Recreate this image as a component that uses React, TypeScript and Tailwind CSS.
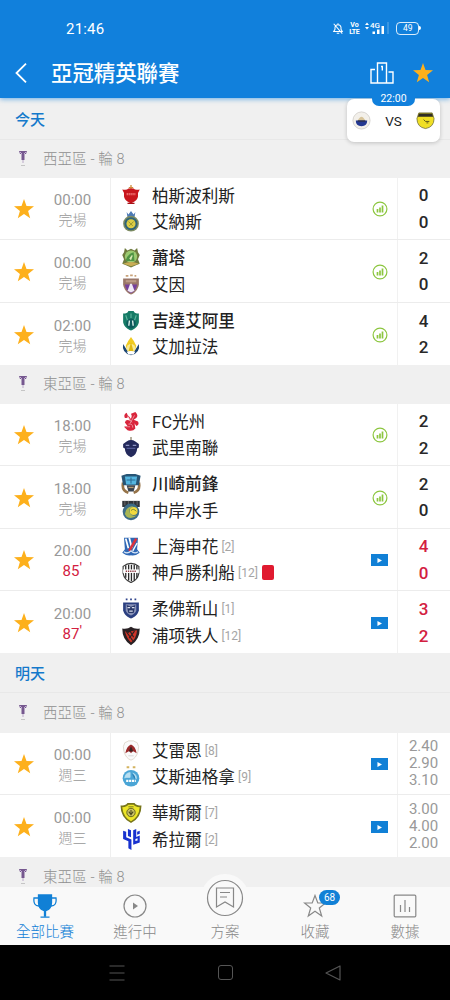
import React from "react";
import clsx from "clsx";

interface Team {
  name: string;
  crest: React.ReactNode;
  rank?: number;
  winner?: boolean;
  redCard?: boolean;
}

interface Match {
  time: string;
  status: string;
  live?: boolean;
  home: Team;
  away: Team;
  action: "stats" | "video";
  score?: [string, string];
  odds?: string[];
}

const Crest = ({ children }: { children: React.ReactNode }) => (
  <svg viewBox="0 0 24 24" className="h-[21px] w-[22px] shrink-0">
    {children}
  </svg>
);

const crests = {
  persepolis: (
    <Crest>
      <path d="M12 0V5M9.500 3H14.500" stroke="#d08a3a" strokeWidth="1.500" />
      <path d="M2 5Q7 6.500 9 4H15Q17 6.500 22 5Q19.500 8 20 13C19 18 15 19 12 21C9 19 5 18 4 13Q4.500 8 2 5Z" fill="#c8161d" />
      <path d="M7 10.500H17" stroke="#ee7070" strokeWidth="2.500" strokeDasharray="1.500 .7" />
      <path d="M8 21H16" stroke="#a61217" strokeWidth="1.500" />
    </Crest>
  ),
  nassr: (
    <Crest>
      <path d="M7 1L9 4L12 0L15 4L17 1L16 7H8Z" fill="#4c79b5" />
      <circle cx="12" cy="14.500" r="9" fill="#7f8c62" />
      <circle cx="12" cy="14.500" r="7.500" fill="#2f6478" />
      <circle cx="12" cy="14.500" r="5.200" fill="#dccd45" />
      <path d="M9 12L14 17M10 17L15 12" stroke="#8e8f2c" strokeWidth="1" />
    </Crest>
  ),
  shorta: (
    <Crest>
      <path d="M5 1L8 4L12 2L16 4L19 1L20 6L22 9L20 14L22 19Q17 21 12 23.500Q7 21 2 19L4 14L2 9L4 6Z" fill="#6f7b3e" />
      <circle cx="12" cy="11" r="7" fill="#9ccb72" />
      <path d="M6 15Q9 7 15 6L16 16H7Z" fill="#4f9444" />
      <path d="M10 13L13 9L14 10L12 15Z" fill="#d9e8b2" />
      <path d="M3 19Q12 15 21 19L12 22Z" fill="#c9ad55" />
    </Crest>
  ),
  ain: (
    <Crest>
      <path d="M6 2H9M11 1.500H14M16 2H18" stroke="#c8a27a" strokeWidth="2" />
      <path d="M3 5H21V12C20 18 16 22 12 23.500C8 22 4 18 3 12Z" fill="#9a7768" />
      <path d="M5 12H19Q18 19 12 22Q6 19 5 12Z" fill="#76409c" />
      <path d="M6 7H18V9.500H6Z" fill="#bd9c86" />
      <path d="M8 19L11 11H13L16 19L12 21Z" fill="#efe8f6" />
    </Crest>
  ),
  ahli: (
    <Crest>
      <path d="M3 4Q8 4 9 1H15Q16 4 21 4V14C20 19 16 22 12 23.500C8 22 4 19 3 14Z" fill="#167b66" />
      <path d="M6 6L8 12M12 4V9M18 6L16 12" stroke="#5fb39d" strokeWidth="1.300" />
      <circle cx="12" cy="15.500" r="5.500" fill="#0d5b5c" />
      <path d="M10.200 12L9.500 18M13.800 12L14.500 18" stroke="#dff2ec" strokeWidth="1.600" />
    </Crest>
  ),
  gharafa: (
    <Crest>
      <path d="M12 1Q16 6 18 11L16 18H8L6 11Q8 6 12 1Z" fill="#f0cb22" />
      <path d="M3 9Q1 19 12 22Q23 19 21 9L16 17H8Z" fill="#1c4572" />
      <circle cx="12" cy="14" r="5" fill="#f8e993" />
      <path d="M9 18L12 7L15 18Z" fill="#e0b90f" />
      <path d="M7 18Q12 16 17 18L15 21H9Z" fill="#fff" />
    </Crest>
  ),
  guangzhou: (
    <Crest>
      <path d="M7 2Q3 4 5 8Q9 8 9 5L12 9Q14 6 12 3L17 1Q21 5 18 8L15 10L20 12Q22 16 18 17L16 14L17 20Q14 24 8 22L4 18L8 17L5 13Q6 9 11 11Z" fill="#d9253c" />
      <path d="M8 6L13 13M16 5L11 14M9 15Q14 14 14 19M6 18H11" stroke="#f3b5bd" strokeWidth=".8" fill="none" />
    </Crest>
  ),
  buriram: (
    <Crest>
      <path d="M12 0V5" stroke="#8f866c" strokeWidth="1.500" />
      <path d="M7 5Q12 2 17 5L21 8V12L19 13Q19 20 12 23Q5 20 5 13L3 12V8Z" fill="#242a5c" />
      <path d="M6 9.500H10M14 9.500H18" stroke="#8d93c2" strokeWidth="1.300" />
      <path d="M7 13H17" stroke="#535b96" strokeWidth="1.500" />
    </Crest>
  ),
  kawasaki: (
    <Crest>
      <path d="M3 11Q1 20 9 22.500M21 11Q23 20 15 22.500" fill="none" stroke="#967449" strokeWidth="3" />
      <path d="M1 3L7 1H17L23 3L21 14H3Z" fill="#285575" />
      <path d="M5 4H19L17.500 13H6.500Z" fill="#55b6e0" />
      <path d="M7 8H17M12 5V12" stroke="#2c6a91" strokeWidth="1.200" />
      <path d="M7 14H17L15 21H9Z" fill="#3a4450" />
      <path d="M9 16.500H15" stroke="#b79a6d" strokeWidth="1.500" />
    </Crest>
  ),
  mariners: (
    <Crest>
      <path d="M2 1H22V8H2Z" fill="#30343a" />
      <path d="M5 1V6M9 1V6M15 1V6M19 1V6" stroke="#888" strokeWidth=".7" />
      <circle cx="12" cy="13.500" r="9.500" fill="#3c6c88" />
      <path d="M5 16Q6 7 15 7Q8 10 11 15Q13 20 19 17Q13 23 7 19Z" fill="#a8b653" />
      <circle cx="15" cy="12.500" r="4.500" fill="#f1da3d" />
      <path d="M12 12Q15 9 18 13" fill="none" stroke="#697e3a" />
    </Crest>
  ),
  shenhua: (
    <Crest>
      <path d="M4 2H20L19 15L22 19Q17 23 12 22Q7 23 2 19L5 15Z" fill="#2f68b5" />
      <path d="M6 3L9 14M10 2L13 14" stroke="#fff" strokeWidth="2" />
      <path d="M18 3L10 17" stroke="#d9333f" strokeWidth="3" />
      <path d="M19 8L14 17" stroke="#fff" strokeWidth="1.500" />
      <path d="M4 18Q8 21 12 17Q16 21 20 18" fill="none" stroke="#d6e5f6" strokeWidth="1.500" />
    </Crest>
  ),
  vissel: (
    <Crest>
      <path d="M3 5Q12-2 21 5V13C20 18 16 22 12 23.500C8 22 4 18 3 13Z" fill="#fff" stroke="#3c3c3c" strokeWidth="1.300" />
      <path d="M6 4V18M9.300 3V21M12.500 3V22M15.700 3V21M18.700 4V18" stroke="#292929" strokeWidth="1.500" />
      <path d="M3 8.500H21V12.500H3Z" fill="#fff" />
      <path d="M6 10.500H18" stroke="#8e3840" strokeWidth="1.600" strokeDasharray="1.500 1" />
    </Crest>
  ),
  johor: (
    <Crest>
      <path d="M6 1.500H8M11 1.500H13M16 1.500H18" stroke="#30448c" strokeWidth="2" />
      <path d="M3 5H21V14C20 19 16 22 12 23.500C8 22 4 19 3 14Z" fill="#2b3f80" />
      <path d="M6 7H18V14Q17 18 12 20Q7 18 6 14Z" fill="#8892b7" />
      <path d="M7 8L12 10L17 8L15 17H9Z" fill="#293769" />
      <path d="M8 11H11M13 11H16M10 15H14" stroke="#dce1ef" strokeWidth="1.200" />
    </Crest>
  ),
  pohang: (
    <Crest>
      <path d="M2 4Q8 5 12 2Q16 5 22 4Q22 17 12 23Q2 17 2 4Z" fill="#292124" />
      <path d="M5 7L9 9L12 7L19 6Q18 16 12 20Q7 15 5 7Z" fill="#ce3428" />
      <path d="M7 8L14 18M11 7L15 14M16 7L10 15" stroke="#292124" strokeWidth="1.300" />
    </Crest>
  ),
  rayyan: (
    <Crest>
      <path d="M5 3Q8 2 9 1H15Q16 2 19 3Q22 7 20 13Q18 21 12 23Q6 21 4 13Q2 7 5 3Z" fill="#fafafa" stroke="#ddd6ca" strokeWidth="1" />
      <path d="M5.500 15Q7 7 12 5Q17 7 18.500 15L14 12.500L12 15L10 12.500Z" fill="#9c2a2a" />
      <path d="M12 7L14.500 13H9.500Z" fill="#3a2523" />
      <path d="M9 18H15" stroke="#dedede" strokeWidth="1.500" />
    </Crest>
  ),
  esteghlal: (
    <Crest>
      <path d="M7 1.500H10M14 1.500H17" stroke="#d4b35f" strokeWidth="2.400" />
      <circle cx="12" cy="14" r="9.500" fill="#4aa5d6" />
      <path d="M5 14Q5 8 11 7.500V13H5ZM14 8Q19 10 18 15" fill="#b9dff1" stroke="#b9dff1" strokeWidth=".8" />
      <path d="M13 8.500Q18 11 16 15Z" fill="#2b7fb5" />
      <path d="M6.500 17H17.500" stroke="#fff" strokeWidth="2.600" strokeDasharray="2.500 .8" />
    </Crest>
  ),
  wasl: (
    <Crest>
      <path d="M0 4Q6 4 8 1H16Q18 4 24 4Q24 18 12 24Q0 18 0 4Z" fill="#77751b" />
      <path d="M2 6Q8 5 9 3H15Q16 5 22 6Q21 17 12 22Q3 17 2 6Z" fill="#ece527" />
      <circle cx="12" cy="12" r="4.800" fill="#c9c264" stroke="#5d5a1b" />
      <path d="M9.500 11L12 14.500L14.500 11M12 9V15" stroke="#49471b" strokeWidth="1.200" fill="none" />
      <path d="M9 5.500H15" stroke="#706d21" />
    </Crest>
  ),
  hilal: (
    <Crest>
      <path d="M3 2L6.500 3V9.500L12.500 12V24L9 22V14L3 11.500Z" fill="#1832cf" />
      <path d="M8.500 0L12 1.500V9.500L8.500 8Z" fill="#1832cf" />
      <path d="M14.500 1.500L18 0V9L22 7.500V15.500L14.500 18Z" fill="#1832cf" />
      <path d="M19 3L22 2V5.500L19 6.500Z" fill="#1832cf" />
      <path d="M17 11.500L19.500 10.700V13L17 13.800Z" fill="#fff" />
    </Crest>
  ),
};

const westToday: Match[] = [
  {
    time: "00:00",
    status: "完場",
    home: { name: "柏斯波利斯", crest: crests.persepolis },
    away: { name: "艾納斯", crest: crests.nassr },
    action: "stats",
    score: ["0", "0"],
  },
  {
    time: "00:00",
    status: "完場",
    home: { name: "蕭塔", crest: crests.shorta, winner: true },
    away: { name: "艾因", crest: crests.ain },
    action: "stats",
    score: ["2", "0"],
  },
  {
    time: "02:00",
    status: "完場",
    home: { name: "吉達艾阿里", crest: crests.ahli, winner: true },
    away: { name: "艾加拉法", crest: crests.gharafa },
    action: "stats",
    score: ["4", "2"],
  },
];

const eastToday: Match[] = [
  {
    time: "18:00",
    status: "完場",
    home: { name: "FC光州", crest: crests.guangzhou },
    away: { name: "武里南聯", crest: crests.buriram },
    action: "stats",
    score: ["2", "2"],
  },
  {
    time: "18:00",
    status: "完場",
    home: { name: "川崎前鋒", crest: crests.kawasaki, winner: true },
    away: { name: "中岸水手", crest: crests.mariners },
    action: "stats",
    score: ["2", "0"],
  },
  {
    time: "20:00",
    status: "85",
    live: true,
    home: { name: "上海申花", crest: crests.shenhua, rank: 2 },
    away: { name: "神戶勝利船", crest: crests.vissel, rank: 12, redCard: true },
    action: "video",
    score: ["4", "0"],
  },
  {
    time: "20:00",
    status: "87",
    live: true,
    home: { name: "柔佛新山", crest: crests.johor, rank: 1 },
    away: { name: "浦项铁人", crest: crests.pohang, rank: 12 },
    action: "video",
    score: ["3", "2"],
  },
];

const westTomorrow: Match[] = [
  {
    time: "00:00",
    status: "週三",
    home: { name: "艾雷恩", crest: crests.rayyan, rank: 8 },
    away: { name: "艾斯迪格拿", crest: crests.esteghlal, rank: 9 },
    action: "video",
    odds: ["2.40", "2.90", "3.10"],
  },
  {
    time: "00:00",
    status: "週三",
    home: { name: "華斯爾", crest: crests.wasl, rank: 7 },
    away: { name: "希拉爾", crest: crests.hilal, rank: 2 },
    action: "video",
    odds: ["3.00", "4.00", "2.00"],
  },
];

const Star = () => (
  <svg viewBox="0 0 20 20" className="h-5 w-5" fill="#fdb01c">
    <path d="M10 0L12.500 7L20 7.300L14.100 11.900L16.200 19.200L10 15L3.800 19.200L5.900 11.900L0 7.300L7.500 7Z" />
  </svg>
);

const StatsIcon = () => (
  <svg viewBox="0 0 16 16" className="ml-[2px] h-4 w-4" fill="none" stroke="#8cc63f">
    <circle cx="8" cy="8" r="6.900" strokeWidth="1.200" />
    <path d="M5.500 8V11.500M8 6.500V11.500M10.500 4.500V11.500" strokeWidth="1.700" />
  </svg>
);

const VideoIcon = () => (
  <div className="flex h-3 w-[17px] items-center justify-center bg-[#1180d6]">
    <svg viewBox="0 0 6 6" className="h-[5px] w-[5px]" fill="#fff">
      <path d="M0.500 0L6 3L0.500 6Z" />
    </svg>
  </div>
);

const TeamLine = ({ team }: { team: Team }) => (
  <div className="flex h-[26.500px] items-center">
    {team.crest}
    <span
      className={clsx(
        "ml-2.5 pt-[3px] text-[16.600px] leading-[26px] whitespace-nowrap text-[#222]",
        team.winner ? "font-medium" : "font-normal"
      )}
    >
      {team.name}
    </span>
    {team.rank && <span className="ml-[3px] pt-px text-[12px] text-[#a5a5a5]">[{team.rank}]</span>}
    {team.redCard && <span className="ml-[4px] h-[15px] w-[12px] rounded-[2px] bg-[#e01a30]" />}
  </div>
);

const MatchRow = ({ match }: { match: Match }) => (
  <div className="flex h-[62.500px] border-b border-[#ececec] bg-white last:h-[62px] last:border-b-0">
    <div className="flex w-12 items-center justify-center pt-[2px]">
      <Star />
    </div>
    <div className="flex w-[49px] flex-col items-center justify-center pt-[5px] text-[#999]">
      <span className="text-[15px] leading-[20px]">{match.time}</span>
      {match.live ? (
        <span className="flex text-[15px] leading-[21px] text-[#d3203f]">
          {match.status}
          <span className="-mt-[3px] w-[3px] text-[15px]">'</span>
        </span>
      ) : (
        <span className="text-[14px] leading-[21px] font-light">{match.status}</span>
      )}
    </div>
    <div className="ml-[13px] flex flex-1 flex-col justify-center border-l border-[#efefef] pl-[9px]">
      <TeamLine team={match.home} />
      <TeamLine team={match.away} />
    </div>
    <div className="flex w-9 items-center justify-center pt-[2px]">
      {match.action === "stats" ? <StatsIcon /> : <VideoIcon />}
    </div>
    <div className="flex w-[53px] flex-col items-center justify-center border-l border-[#f1f1f1] pt-px pr-px">
      {match.score?.map((goals, i) => (
        <span
          key={i}
          className={clsx(
            "text-[17px] leading-[26.500px] font-medium",
            match.live ? "text-[#d3203f]" : "text-[#282828]"
          )}
        >
          {goals}
        </span>
      ))}
      {match.odds?.map((odd, i) => (
        <span key={i} className="text-[15px] leading-[17px] text-[#999]">
          {odd}
        </span>
      ))}
    </div>
  </div>
);

const MatchList = ({ matches }: { matches: Match[] }) => (
  <div>
    {matches.map((match, i) => (
      <MatchRow key={i} match={match} />
    ))}
  </div>
);

const DateRow = ({ label, className }: { label: string; className: string }) => (
  <div className={clsx("flex items-center border-b border-[#e8e8e8] pl-[15px]", className)}>
    <span className="text-[15px] font-medium text-[#1479cb]">{label}</span>
  </div>
);

const SectionRow = ({ label, className }: { label: string; className: string }) => (
  <div className={clsx("flex items-center pl-[18px]", className)}>
    <svg viewBox="0 0 10 18" className="h-[18px] w-[10px]">
      <path d="M1 1H9L8 4H6.500V10H3.500V4H2Z" fill="#76588f" />
      <path d="M2 2L4 4M8 2L6 4" stroke="#c6b2d6" />
      <path d="M4 10H6V13H4Z" fill="#d5ccdc" />
      <path d="M3 15.500H7" stroke="#c5c5c5" strokeWidth="1" />
    </svg>
    <span className="ml-[15px] pt-[2px] text-[14.500px] tracking-[0.100px] font-light text-[#8f8f8f]">
      {label}
    </span>
  </div>
);

const StatusBar = () => (
  <div className="flex h-[56px] items-center pl-[66px] text-white">
    <span className="mt-0.5 text-[15px] leading-5 tracking-[0.2px]">21:46</span>
    <svg viewBox="0 0 14 14" className="ml-[228px] h-[13px] w-[12px]" fill="none" stroke="#fff" strokeWidth="1.200">
      <path d="M2 10.500H12L10.500 8V5.500Q10 2.500 7 2.500Q4 2.500 3.500 5.500V8ZM7 1V2.500M5.500 12.500H8.500M2 1.500L12 13" />
    </svg>
    <div className="ml-[6px] flex w-[10px] flex-col pt-px text-[7px] leading-[6.500px] font-bold">
      <span>Vo</span>
      <span className="-ml-px tracking-[-0.500px]">LTE</span>
    </div>
    <svg viewBox="0 0 25 14" className="ml-[5px] h-[14px] w-[25px]" fill="#fff">
      <path d="M0 4L2 1.500L4 4ZM0 6L2 8.500L4 6Z" />
      <text x="5" y="7" fontSize="8" fontWeight="500" fontFamily="Roboto">4G</text>
      <path d="M7.500 10.500H10V13H7.500ZM12 8.500H14.500V13H12ZM16.500 5H19V13H16.500Z" />
      <path d="M22.500 1H23.500V13H22.500Z" opacity=".35" />
    </svg>
    <div className="ml-[6px] flex h-[13px] w-[23px] items-center justify-center rounded-[4px] border-[1.500px] border-white/85 text-[8.500px] leading-none">
      49
    </div>
    <div className="h-1 w-[1.500px] rounded-r bg-white" />
  </div>
);

const Header = () => (
  <header className="relative z-10 h-[98px] shrink-0 bg-[#1180dc] shadow-[0_1px_5px_rgba(17,128,220,0.6)]">
    <StatusBar />
    <div className="flex h-[34px] items-center pl-[15px]">
      <svg viewBox="0 0 12 20" className="h-5 w-3" fill="none" stroke="#fff" strokeWidth="1.800">
        <path d="M11 0.700L1.500 10L11 19.300" />
      </svg>
      <h1 className="ml-6 pt-[2px] text-[21.400px] leading-[32px] font-medium text-white">亞冠精英聯賽</h1>
      <svg viewBox="0 0 24 22" className="ml-auto h-[22px] w-6" fill="none" stroke="#fff" strokeWidth="1.400">
        <path d="M7.500 21V1H16.500V21M5 7.500H1V21H23V10H18.500M11 4.500H12.300V8.500" />
      </svg>
      <div className="mr-[17px] ml-[19px]">
        <Star />
      </div>
    </div>

    {/* next fixture, hangs over the list */}
    <div className="absolute top-[99px] right-[10px] flex h-[43px] w-[93px] items-center justify-between rounded-[7px] bg-white px-[5px] shadow-[0_1px_4px_rgba(0,0,0,0.2)]">
      <svg viewBox="0 0 20 20" className="h-[19px] w-[19px]">
        <circle cx="10" cy="10" r="9" fill="#f3f0ea" stroke="#d5d2cd" />
        <path d="M4 10H16Q16 16 10 16Q4 16 4 10Z" fill="#243891" />
        <path d="M6 10Q10 2 14 10Z" fill="#d7c49b" />
        <path d="M6 10.500H14" stroke="#2b2e48" strokeWidth="1.500" />
      </svg>
      <span className="mt-[2px] text-[13.500px] text-[#222]">VS</span>
      <svg viewBox="0 0 20 20" className="h-[19px] w-[19px]">
        <path d="M3 2H17L19 8Q19 17 10 18.500Q1 17 1 8Z" fill="#f0df25" stroke="#6b6926" strokeWidth=".8" />
        <path d="M3 2.500H17L18 6H2Z" fill="#302e25" />
        <path d="M8 9L10 11H14M11 12.500H13" stroke="#5a5418" fill="none" />
      </svg>
      <div className="absolute -top-[8px] left-[25px] flex h-[15px] w-[43px] items-center justify-center rounded-b-[7px] bg-[#1180dc] text-[10.500px] text-white">
        22:00
      </div>
    </div>
  </header>
);

const NavItem = ({
  label,
  active,
  children,
}: {
  label: string;
  active?: boolean;
  children: React.ReactNode;
}) => (
  <div className={clsx("flex flex-1 flex-col items-center", active ? "text-[#1180d6]" : "text-[#888]")}>
    <div className="relative flex h-[37px] items-center justify-center">{children}</div>
    <span className="text-[14.500px] leading-[18px] font-light">{label}</span>
  </div>
);

const BottomNav = () => (
  <nav className="relative z-10 flex h-[58px] shrink-0 bg-[#f9f9f9]">
    <NavItem label="全部比賽" active>
      <svg viewBox="0 0 24 24" className="h-6 w-6" fill="none" stroke="currentColor" strokeWidth="1.300">
        <path d="M5.500 1H18.500V9Q18 15 14 16L12.500 17V22H11.500V17L10 16Q6 15 5.500 9Z" fill="currentColor" />
        <path d="M5 4H1Q0 12 6 12M19 4H23Q24 12 18 12M7.500 23.200H16.500" />
      </svg>
    </NavItem>
    <NavItem label="進行中">
      <svg viewBox="0 0 24 24" className="h-6 w-6" fill="none" stroke="currentColor" strokeWidth="1.200">
        <circle cx="12" cy="12" r="11" />
        <path d="M10 8.500L15 12L10 15.500Z" fill="currentColor" stroke="none" />
      </svg>
    </NavItem>
    <NavItem label="方案">
      <div className="absolute -top-[13px] flex h-[48px] w-[48px] items-center justify-center rounded-full bg-[#f9f9f9]">
        <svg viewBox="0 0 38 38" className="h-[38px] w-[38px]" fill="none" stroke="currentColor" strokeWidth="1.200">
          <circle cx="19" cy="19" r="17.500" />
          <path d="M10.500 9H27.500V28L19 23L10.500 28ZM14 13.500H24M14 18H21" />
        </svg>
      </div>
    </NavItem>
    <NavItem label="收藏">
      <svg viewBox="0 0 24 24" className="h-6 w-6" fill="none" stroke="currentColor" strokeWidth="1.200">
        <path d="M12 1.500L14.800 9H22.500L16.300 14L18.700 22L12 17.300L5.300 22L7.700 14L1.500 9H9.200Z" />
      </svg>
      <span className="absolute top-[3px] left-[16px] flex h-[15px] w-[21px] items-center justify-center rounded-full bg-[#1180d6] text-[10px] leading-none text-white">
        68
      </span>
    </NavItem>
    <NavItem label="數據">
      <svg viewBox="0 0 24 24" className="h-6 w-6" fill="none" stroke="currentColor" strokeWidth="1.200">
        <rect x="1.200" y="1.200" width="21.600" height="21.600" rx="1" />
        <path d="M7.500 11V18M12 6V18M16.500 13V18" />
      </svg>
    </NavItem>
  </nav>
);

const SystemBar = () => (
  <div className="flex h-[55px] shrink-0 items-center justify-between bg-black px-[109px] text-[#555]">
    <svg viewBox="0 0 16 16" className="h-4 w-4" fill="none" stroke="currentColor" strokeWidth="1.200">
      <path d="M0.500 1H15.500M0.500 8H15.500M0.500 15H15.500" />
    </svg>
    <div className="h-[15px] w-[15px] rounded-[3px] border border-current" />
    <svg viewBox="0 0 16 16" className="h-4 w-4" fill="none" stroke="currentColor" strokeWidth="1.200">
      <path d="M15 1V15L1 8Z" strokeLinejoin="round" />
    </svg>
  </div>
);

export default function App() {
  return (
    <div className="flex h-[1000px] w-[450px] flex-col overflow-hidden bg-[#f0f0f0] font-[Roboto,'Noto_Sans_CJK_TC',sans-serif]">
      <Header />
      <main className="min-h-0 flex-1 overflow-hidden">
        <DateRow label="今天" className="h-[41.500px] pt-[3px]" />
        <SectionRow label="西亞區 - 輪 8" className="h-[38px]" />
        <MatchList matches={westToday} />
        <SectionRow label="東亞區 - 輪 8" className="h-[39px]" />
        <MatchList matches={eastToday} />
        <DateRow label="明天" className="h-[39.500px] pt-[4px]" />
        <SectionRow label="西亞區 - 輪 8" className="h-[40px]" />
        <MatchList matches={westTomorrow} />
        <SectionRow label="東亞區 - 輪 8" className="h-[39px]" />
      </main>
      <BottomNav />
      <SystemBar />
    </div>
  );
}
